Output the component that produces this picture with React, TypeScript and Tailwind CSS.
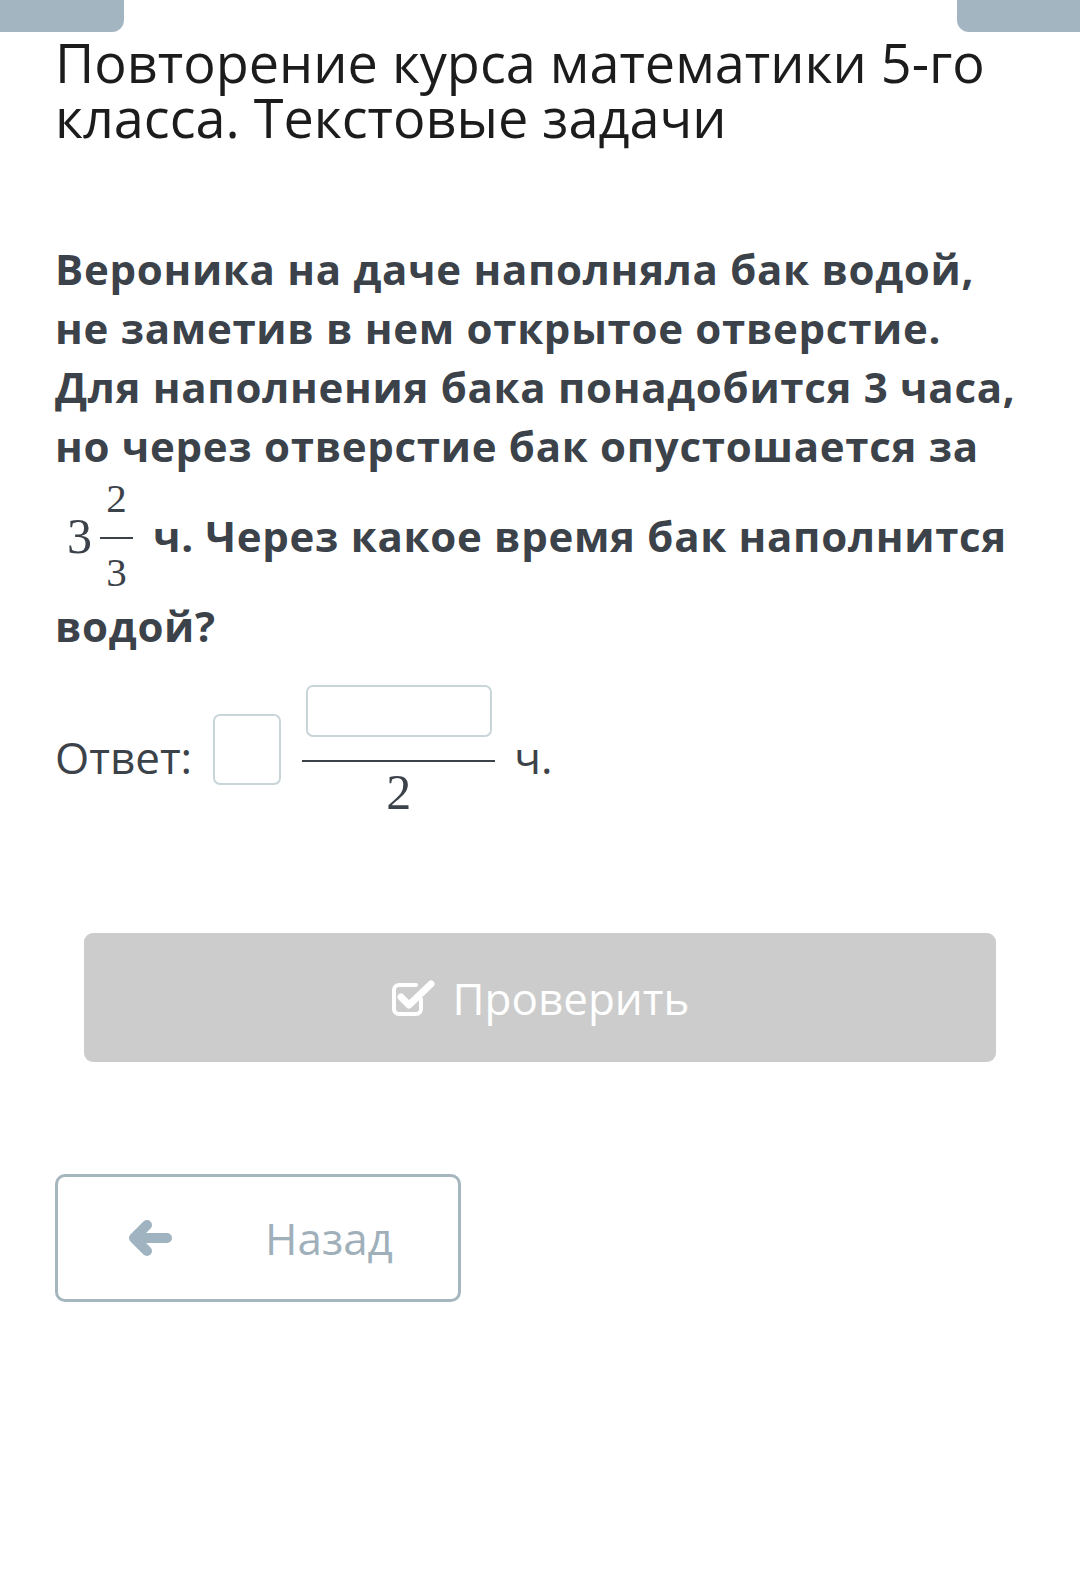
import React from 'react';

function CheckSquareIcon() {
  return (
    <svg width="46" height="38" viewBox="0 0 46 38" fill="none">
      <path
        d="M30 20v10a5 5 0 0 1-5 5H8a5 5 0 0 1-5-5V11a5 5 0 0 1 5-5h17"
        stroke="white"
        strokeWidth="4"
        strokeLinecap="round"
      />
      <path
        d="M10 18l8 8L40 5"
        stroke="white"
        strokeWidth="7"
        strokeLinecap="round"
        strokeLinejoin="round"
      />
    </svg>
  );
}

function ArrowLeftIcon() {
  return (
    <svg width="44" height="36" viewBox="0 0 44 36" fill="none">
      <path
        d="M19 5L6 18l13 13M7 18h32"
        stroke="#9fb3c1"
        strokeWidth="10"
        strokeLinecap="round"
        strokeLinejoin="round"
      />
    </svg>
  );
}

export default function App() {
  return (
    <div className="w-full min-h-[1576px] bg-white font-['Open_Sans',sans-serif]">
      {/* top tabs */}
      <div className="flex justify-between h-[32px]">
        <div className="w-[124px] h-full bg-[#a3b5c1] rounded-br-[12px]" />
        <div className="w-[123px] h-full bg-[#a3b5c1] rounded-bl-[12px]" />
      </div>

      <div className="px-[55px]">
        <h1 className="mt-[3px] text-[54px] leading-[55px] font-normal text-[#1c1c1c] whitespace-nowrap">
          Повторение курса математики 5-го
          <br />
          класса. Текстовые задачи
        </h1>

        {/* question */}
        <p className="mt-[94px] text-[42px] leading-[59px] tracking-[0.7px] font-bold text-[#3c4249] whitespace-nowrap">
          Вероника на даче наполняла бак водой,
          <br />
          не заметив в нем открытое отверстие.
          <br />
          Для наполнения бака понадобится 3 часа,
          <br />
          но через отверстие бак опустошается за
          <br />
          <span className="inline-block overflow-hidden align-[-44px] h-[121px] pl-[12px] mr-[20px] tracking-normal">
            <span className="flex h-full font-['Liberation_Serif',serif] font-normal">
              <span className="flex items-center text-[50px] leading-none">3</span>
              <span className="flex flex-col items-center w-[33px] ml-[8px] pt-[3px]">
                <span className="h-[40px] text-[41px] leading-[40px]">2</span>
                <span className="mt-[19px] w-full h-[2px] bg-[#3c4249]" />
                <span className="mt-[13px] h-[40px] text-[41px] leading-[40px]">3</span>
              </span>
            </span>
          </span>
          ч. Через какое время бак наполнится
          <br />
          водой?
        </p>

        {/* answer */}
        <div className="mt-[29px] flex items-start h-[125px] text-[#3c4249]">
          <span className="mt-[51px] text-[44px] leading-none">Ответ:</span>
          <div className="ml-[21px] mt-[30px] w-[68px] h-[71px] rounded-[7px] border-2 border-[#c9d6d9]" />
          <div className="ml-[21px] w-[193px] flex flex-col items-center">
            <div className="mt-[1px] w-[186px] h-[52px] rounded-[7px] border-2 border-[#c9d6d9]" />
            <div className="mt-[23px] w-full h-[2px] bg-[#3c4249]" />
            <span className="mt-[5px] text-[50px] leading-none font-['Liberation_Serif',serif]">2</span>
          </div>
          <span className="ml-[19px] mt-[51px] text-[44px] leading-none">ч.</span>
        </div>
      </div>

      {/* check button */}
      <div className="mt-[124px] mx-[84px] w-[912px] h-[129px] rounded-[9px] bg-[#cccccc] flex items-center justify-center gap-[16px]">
        <CheckSquareIcon />
        <span className="text-[44px] leading-none text-white">Проверить</span>
      </div>

      {/* back button */}
      <div className="px-[55px] mt-[112px]">
        <div className="w-[406px] h-[128px] rounded-[10px] border-[3px] border-[#a6b6be] flex items-center pl-[70px]">
          <ArrowLeftIcon />
          <span className="ml-[93px] text-[44px] leading-none text-[#9fb0bb]">Назад</span>
        </div>
      </div>
    </div>
  );
}
